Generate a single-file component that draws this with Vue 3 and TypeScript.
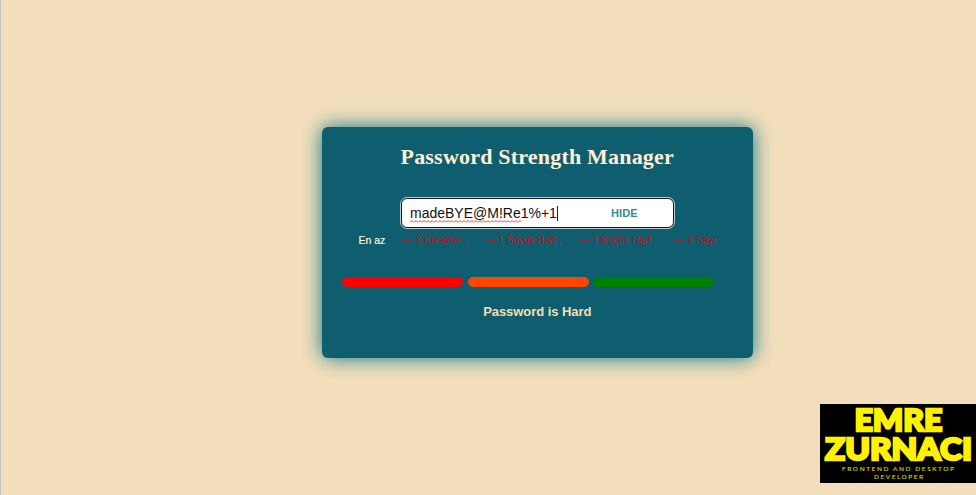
<script setup lang="ts">
import { computed, ref } from 'vue'

interface Rule {
  label: string
  key: string
}

const password = ref<string>('madeBYE@M!Re1%+1')
const visible = ref<boolean>(true)
const rules: Rule[] = [
  { key: 'length', label: '3 Karakter ,' },
  { key: 'upper', label: '1 Büyük Harf ,' },
  { key: 'lower', label: '1 Küçük Harf ,' },
  { key: 'digit', label: '1 Sayı' },
]
const levels: string[] = ['easy', 'medium', 'hard']
const misspelled = computed<string>(() => (visible.value ? password.value.slice(0, 12) : ''))
const rest = computed<string>(() =>
  visible.value ? password.value.slice(12) : '•'.repeat(password.value.length),
)
</script>

<template>
  <main class="page">
    <section class="card">
      <h1 class="title">Password Strength Manager</h1>
      <div class="field">
        <div class="value"><span class="word">{{ misspelled }}<svg class="squiggle" width="111" height="3" viewBox="0 0 111 3">
          <defs>
            <pattern id="wave" width="4" height="3" patternUnits="userSpaceOnUse">
              <path d="M0 2.5 L2 .5 L4 2.5" fill="none" stroke="#f03030" stroke-width="1" />
            </pattern>
          </defs>
          <rect width="111" height="3" fill="url(#wave)" />
        </svg></span><span>{{ rest }}</span><i class="caret"></i></div>
        <button class="toggle" type="button" @click="visible = !visible">{{ visible ? 'HIDE' : 'SHOW' }}</button>
      </div>
      <div class="rules">
        <span class="lead">En az</span>
        <span v-for="rule in rules" :key="rule.key" class="rule" :class="rule.key">
          <svg class="arrow" width="11" height="7" viewBox="0 0 11 7">
            <path d="M0 3.5H10M8 2L10 3.5L8 5" fill="none" stroke="currentColor" stroke-width=".7" />
          </svg>
          <span>{{ rule.label }}</span>
        </span>
      </div>
      <div class="bars">
        <span v-for="level in levels" :key="level" class="bar" :class="level"></span>
      </div>
      <p class="result">Password is Hard</p>
    </section>
    <svg class="brand" width="156" height="79" viewBox="0 0 156 79">
      <rect width="156" height="79" fill="#000" />
      <g class="brand-name">
        <text x="34.5" y="26.6" textLength="88" lengthAdjust="spacingAndGlyphs">EMRE</text>
        <text x="5" y="56.4" textLength="147" lengthAdjust="spacingAndGlyphs">ZURNACI</text>
      </g>
      <g class="brand-role">
        <text x="22" y="67.2" textLength="112">FRONTEND AND DESKTOP</text>
        <text x="54" y="74.8" textLength="49">DEVELOPER</text>
      </g>
    </svg>
  </main>
</template>

<style>
body {
  margin: 0;
  background: #f3debc;
}
</style>

<style scoped>
.page {
  position: relative;
  box-sizing: border-box;
  height: 495px;
  padding: 127px 0 0 321px;
  border-left: 1px solid #c0c0c0;
  overflow: hidden;
  background: #f3debc;
  font-family: "Liberation Sans", Arial, sans-serif;
}
.card {
  box-sizing: border-box;
  width: 430.5px;
  height: 230.5px;
  padding: 17px 20px 0;
  border-radius: 6px;
  background: #0f5e70;
  box-shadow: 0 0 20px #0b7886;
  display: flex;
  flex-direction: column;
}
.title {
  margin: 0;
  height: 26px;
  align-self: center;
  white-space: nowrap;
  font: bold 22px/26px "Liberation Serif", "Times New Roman", serif;
  letter-spacing: 0.2px;
  color: #ffefd5;
}
.field {
  box-sizing: border-box;
  width: 273px;
  height: 30px;
  margin: 28px 0 0 59px;
  padding-left: 8px;
  border: 1px solid #201018;
  border-radius: 6px;
  outline: 1px solid #b8ced3;
  background: #fff;
  display: flex;
  align-items: center;
}
.value {
  display: flex;
  align-items: center;
  width: 190px;
  font-size: 14px;
  line-height: 18px;
  color: #101010;
  letter-spacing: 0;
}
.word {
  position: relative;
}
.squiggle {
  position: absolute;
  left: 0;
  bottom: -1px;
}
.caret {
  width: 1px;
  height: 15px;
  background: #222;
}
.toggle {
  margin: 0 0 0 11px;
  padding: 0;
  border: 0;
  background: none;
  font: bold 11px/14px "Liberation Sans", Arial, sans-serif;
  letter-spacing: 0.1px;
  color: #388990;
}
.rules {
  display: flex;
  align-items: center;
  height: 14px;
  margin: 5px 0 0 16.5px;
  font-size: 10px;
  white-space: nowrap;
}
.lead {
  width: 43.5px;
  font-size: 10.5px;
  -webkit-text-stroke: 0.2px #ffefd5;
  color: #ffefd5;
}
.rule {
  display: flex;
  align-items: center;
  gap: 2.5px;
  color: #c40e1b;
}
.arrow {
  flex: none;
}
.length {
  width: 82.5px;
}
.upper {
  width: 95px;
}
.lower {
  width: 94.5px;
}
.bars {
  display: flex;
  gap: 4.5px;
  margin-top: 30px;
}
.bar {
  width: 121px;
  height: 10.4px;
  border-radius: 6px;
}
.easy {
  background: #f00;
}
.medium {
  background: #ff4500;
}
.hard {
  background: #008000;
}
.result {
  margin: 16.6px 0 0;
  align-self: center;
  font-size: 13px;
  font-weight: bold;
  line-height: 16px;
  letter-spacing: -0.06px;
  color: #f5deb3;
}
.brand {
  position: absolute;
  right: 0;
  bottom: 12px;
}
.brand-name {
  font: 900 31px Lato, sans-serif;
  fill: #fff200;
  stroke: #fff200;
  stroke-width: 2.4px;
}
.brand-role {
  font: 6.5px Lato, sans-serif;
  fill: #d8cd00;
  stroke: #d8cd00;
  stroke-width: 0.15px;
}
</style>
